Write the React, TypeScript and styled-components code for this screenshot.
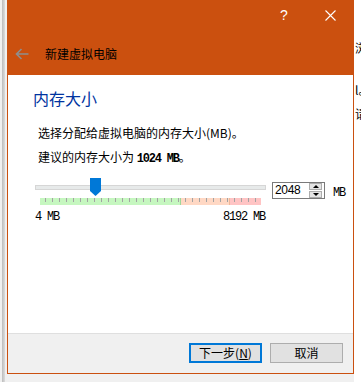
import React from "react";
import styled, { createGlobalStyle } from "styled-components";

const GlobalStyle = createGlobalStyle`
  html, body { margin: 0; padding: 0; background: #f0f0f0; }
  body {
    width: 361px; height: 382px; overflow: hidden;
    font-family: "Noto Sans CJK SC", "Noto Sans", sans-serif;
    font-size: 12px; color: #000;
  }
`;

const Page = styled.div`
  display: flex;
  align-items: flex-start;
  width: 361px;
  height: 382px;
`;

const LeftStrip = styled.div`
  flex: none;
  width: 7px;
  height: 382px;
  box-sizing: border-box;
  padding-left: 2px;
  background: #f0f0f0;
`;

const Edge = styled.div`
  width: 3px;
  height: 100%;
  background: linear-gradient(to right, #bcbcbc, #dcdcdc);
`;

const Window = styled.div`
  flex: none;
  width: 347px;
  height: 374px;
  box-sizing: border-box;
  border: 1px solid #ca5010;
  border-top: none;
  display: flex;
  flex-direction: column;
  background: #fff;
`;

const TitleArea = styled.div`
  flex: none;
  height: 75px;
  background: #cb500f;
  display: flex;
  flex-direction: column;
`;

const CaptionRow = styled.div`
  display: flex;
  justify-content: flex-end;
  height: 30px;
`;

const CaptionButton = styled.div`
  width: 46px;
  height: 30px;
  display: flex;
  align-items: center;
  justify-content: center;
  color: #fff;
  font-family: "Liberation Sans", sans-serif;
  font-size: 14px;
`;

const TitleRow = styled.div`
  display: flex;
  align-items: center;
  gap: 16px;
  height: 45px;
  box-sizing: border-box;
  padding: 2px 0 0 7px;
`;

const TitleText = styled.span`
  font-size: 12px;
  line-height: 16px;
  color: #000;
`;

const Content = styled.div`
  flex: 1;
  display: flex;
  flex-direction: column;
  padding-top: 13px;
`;

const Heading = styled.div`
  margin-left: 25px;
  font-size: 16px;
  line-height: 20px;
  color: #0033a0;
`;

const Para = styled.div<{ $gap: number }>`
  margin: ${(p) => p.$gap}px 0 0 30px;
  font-size: 12px;
  line-height: 16px;
`;

const Mono = styled.span<{ $bold?: boolean }>`
  font-family: "Liberation Mono", monospace;
  font-size: 12px;
  letter-spacing: -1.2px;
  font-weight: ${(p) => (p.$bold ? 700 : 400)};
`;

const SliderRow = styled.div`
  display: flex;
  align-items: flex-start;
  margin-top: 11px;
  padding-left: 27px;
`;

const SliderColumn = styled.div`
  width: 231px;
  display: flex;
  flex-direction: column;
`;

const TrackArea = styled.div`
  position: relative;
  height: 18px;
  display: flex;
  flex-direction: column;
`;

const Track = styled.div`
  margin-top: 7px;
  height: 5px;
  box-sizing: border-box;
  background: #e7eaea;
  border: 1px solid #d6d6d6;
`;

const Thumb = styled.svg`
  position: absolute;
  top: 0;
  width: 11px;
  height: 18px;
`;

const TickBar = styled.div`
  margin: 2px 5px 0;
  height: 7px;
  box-sizing: border-box;
  padding-left: 5px;
  display: flex;
  gap: 6px;
  background: linear-gradient(
    to right,
    #c6f7c0 0 140px,
    #9ed79a 140px 141px,
    #ffd8c4 141px 189px,
    #f0b898 189px 190px,
    #ffc4c4 190px
  );
`;

const Tick = styled.div`
  flex: none;
  width: 1px;
  height: 4px;
  background: #a3a3a3;
`;

const ScaleLabels = styled.div`
  display: flex;
  justify-content: space-between;
  margin-top: 4px;
  padding-right: 1px;
  line-height: 16px;
`;

const SpinBox = styled.div`
  margin: 4px 0 0 6px;
  width: 53px;
  height: 17px;
  box-sizing: border-box;
  border: 1px solid #7a7a7a;
  background: #fff;
  display: flex;
  align-items: center;
`;

const SpinValue = styled.span`
  flex: 1;
  padding-left: 2px;
  font-family: "Liberation Sans", sans-serif;
  font-size: 12px;
  letter-spacing: -0.3px;
  line-height: 15px;
`;

const SpinButtons = styled.div`
  display: flex;
  flex-direction: column;
  gap: 1px;
  margin-right: 2px;
`;

const SpinButton = styled.div`
  width: 13px;
  height: 7px;
  box-sizing: border-box;
  border: 1px solid #adadad;
  background: #e5e5e5;
  display: flex;
  align-items: center;
  justify-content: center;
`;

const Arrow = styled.div<{ $up?: boolean }>`
  width: 0;
  height: 0;
  border-left: 3px solid transparent;
  border-right: 3px solid transparent;
  ${(p) => (p.$up ? "border-bottom: 3px solid #000;" : "border-top: 3px solid #000;")}
`;

const UnitLabel = styled.div`
  margin: 4px 0 0 8px;
  line-height: 17px;
`;

const Footer = styled.div`
  flex: none;
  height: 40px;
  box-sizing: border-box;
  border-top: 1px solid #dfdfdf;
  background: #f0f0f0;
  display: flex;
  justify-content: flex-end;
  align-items: flex-start;
  gap: 8px;
  padding: 9px 10px 0 0;
`;

const Button = styled.button<{ $primary?: boolean }>`
  width: 73px;
  height: 20px;
  box-sizing: border-box;
  margin: 0;
  padding: 0;
  background: #e1e1e1;
  border: ${(p) => (p.$primary ? "2px solid #0078d7" : "1px solid #adadad")};
  font-family: "Noto Sans CJK SC", sans-serif;
  font-size: 12px;
  line-height: 14px;
  color: #000;
  display: flex;
  align-items: center;
  justify-content: center;
`;

const RightStrip = styled.div`
  flex: none;
  width: 7px;
  height: 382px;
  background: #fff;
  overflow: hidden;
  padding-top: 40px;
  box-sizing: border-box;
  white-space: nowrap;
`;

const StripLine = styled.div<{ $gap: number }>`
  margin-top: ${(p) => p.$gap}px;
  padding-left: 1px;
  font-size: 12px;
  line-height: 16px;
`;

const MIN = 4;
const MAX = 8192;
const VALUE = 2048;
const TICK_SPAN = 221;

export default function App() {
  const thumbLeft = ((VALUE - MIN) / (MAX - MIN)) * TICK_SPAN + 5 - 5.5;
  return (
    <>
      <GlobalStyle />
      <Page>
        <LeftStrip>
          <Edge />
        </LeftStrip>
        <Window>
          <TitleArea>
            <CaptionRow>
              <CaptionButton>?</CaptionButton>
              <CaptionButton>
                <svg width="11" height="11" viewBox="0 0 11 11">
                  <path d="M0.5 0.5 L10.5 10.5 M10.5 0.5 L0.5 10.5" stroke="#fff" strokeWidth="1.1" />
                </svg>
              </CaptionButton>
            </CaptionRow>
            <TitleRow>
              <svg width="14" height="12" viewBox="0 0 14 12">
                <path d="M1.5 6 H13.5 M6.5 1 L1.5 6 L6.5 11" stroke="#8e8e8e" strokeWidth="1.6" fill="none" />
              </svg>
              <TitleText>新建虚拟电脑</TitleText>
            </TitleRow>
          </TitleArea>
          <Content>
            <Heading>内存大小</Heading>
            <Para $gap={17}>选择分配给虚拟电脑的内存大小(MB)。</Para>
            <Para $gap={8}>
              建议的内存大小为 <Mono $bold>1024 MB</Mono>。
            </Para>
            <SliderRow>
              <SliderColumn>
                <TrackArea>
                  <Track />
                  <Thumb viewBox="0 0 11 18" style={{ left: thumbLeft }}>
                    <path d="M0 0 H11 V13 L5.5 18 L0 13 Z" fill="#0078d7" />
                  </Thumb>
                </TrackArea>
                <TickBar>
                  {Array.from({ length: 31 }, (_, i) => (
                    <Tick key={i} />
                  ))}
                </TickBar>
                <ScaleLabels>
                  <Mono>4 MB</Mono>
                  <Mono>8192 MB</Mono>
                </ScaleLabels>
              </SliderColumn>
              <SpinBox>
                <SpinValue>2048</SpinValue>
                <SpinButtons>
                  <SpinButton>
                    <Arrow $up />
                  </SpinButton>
                  <SpinButton>
                    <Arrow />
                  </SpinButton>
                </SpinButtons>
              </SpinBox>
              <UnitLabel>
                <Mono>MB</Mono>
              </UnitLabel>
            </SliderRow>
          </Content>
          <Footer>
            <Button $primary>
              下一步(<u>N</u>)
            </Button>
            <Button>取消</Button>
          </Footer>
        </Window>
        <RightStrip>
          <StripLine $gap={0}>浏</StripLine>
          <StripLine $gap={26}>l。</StripLine>
          <StripLine $gap={8}>请</StripLine>
        </RightStrip>
      </Page>
    </>
  );
}
